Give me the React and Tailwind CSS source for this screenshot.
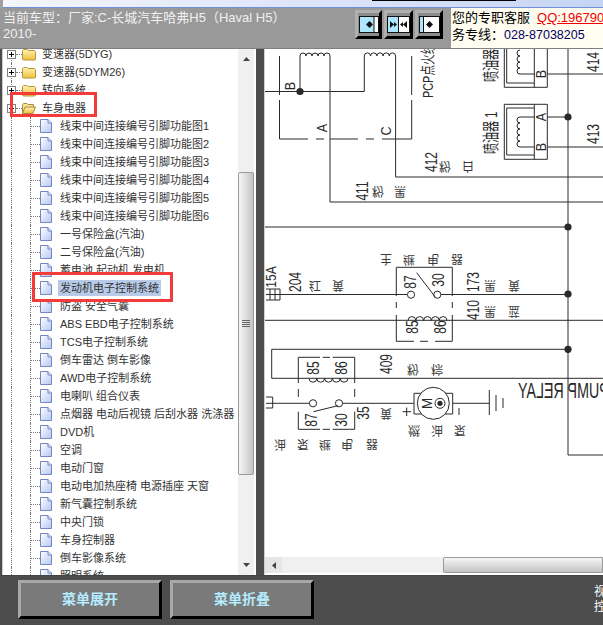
import React from "react";

const FONT = '"Liberation Sans","Noto Sans CJK SC",sans-serif';
const INK = "#2a2a2a";

const top = [
  ["变速器(5DYG)", false],
  ["变速器(5DYM26)", false],
  ["转向系统", false],
  ["车身电器", true],
];
const subs = [
  "线束中间连接编号引脚功能图1",
  "线束中间连接编号引脚功能图2",
  "线束中间连接编号引脚功能图3",
  "线束中间连接编号引脚功能图4",
  "线束中间连接编号引脚功能图5",
  "线束中间连接编号引脚功能图6",
  "一号保险盒(汽油)",
  "二号保险盒(汽油)",
  "蓄电池 起动机 发电机",
  "发动机电子控制系统",
  "防盗 安全气囊",
  "ABS EBD电子控制系统",
  "TCS电子控制系统",
  "倒车雷达 倒车影像",
  "AWD电子控制系统",
  "电喇叭 组合仪表",
  "点烟器 电动后视镜 后刮水器 洗涤器",
  "DVD机",
  "空调",
  "电动门窗",
  "电动电加热座椅 电源插座 天窗",
  "新气囊控制系统",
  "中央门锁",
  "车身控制器",
  "倒车影像系统",
  "照明系统",
];

function Folder({ open }) {
  return (
    <svg width="14" height="13" viewBox="0 0 14 13" className="shrink-0">
      <defs>
        <linearGradient id="fg" x1="0" y1="0" x2="0" y2="1">
          <stop offset="0" stopColor="#fff3b0" />
          <stop offset="1" stopColor="#f0c040" />
        </linearGradient>
      </defs>
      {open ? (
        <>
          <path d="M.5 11.5V2.5L1.5 1.5H5L6 2.5H11.5V5" fill="#f6e3a0" stroke="#a98a38" />
          <path d="M.5 11.5L3 5H13.5L11 11.5Z" fill="url(#fg)" stroke="#a98a38" />
        </>
      ) : (
        <path d="M.5 11.5V2.5L1.5 1.5H5L6 2.5H12.5L13.5 3.5V11.5L12.5 12H1.5Z" fill="url(#fg)" stroke="#b8953a" />
      )}
    </svg>
  );
}

function Doc() {
  return (
    <svg width="12" height="14" viewBox="0 0 12 14" className="shrink-0">
      <defs>
        <linearGradient id="dg" x1="0" y1="0" x2="1" y2="1">
          <stop offset="0" stopColor="#ffffff" />
          <stop offset="1" stopColor="#b4c8f0" />
        </linearGradient>
      </defs>
      <path d="M.5 .5H8L11.5 4V13.5H.5Z" fill="url(#dg)" stroke="#7484c4" />
      <path d="M8 .5V4H11.5" fill="#dfe8fa" stroke="#7484c4" />
    </svg>
  );
}

function Guide() {
  return <div className="absolute left-[8px] top-0 bottom-0 border-l border-dotted border-[#777]" />;
}

function TopRow({ label, open }) {
  return (
    <div className="relative h-[18px] flex items-center pl-[4px] whitespace-nowrap">
      <Guide />
      <div className="relative w-[9px] h-[9px] border border-[#808080] bg-white flex items-center justify-center shrink-0">
        <div className="absolute w-[5px] h-px bg-black" />
        {!open && <div className="absolute w-px h-[5px] bg-black" />}
      </div>
      <div className="w-[6px] border-t border-dotted border-[#777] shrink-0" />
      <Folder open={open} />
      <span className="ml-[6px] text-[11px] text-[#333]">{label}</span>
    </div>
  );
}

function SubRow({ label }) {
  const selected = label === "发动机电子控制系统";
  return (
    <div className="relative h-[18px] flex items-center pl-[27px] whitespace-nowrap">
      <Guide />
      <div className="w-[10px] h-full border-l border-dotted border-[#777] flex items-center shrink-0">
        <div className="w-full border-t border-dotted border-[#777]" />
      </div>
      <Doc />
      <span
        className={
          selected
            ? "ml-[6px] px-[2px] bg-[#b7cbe8] text-[11px] text-[#333] leading-[16px]"
            : "ml-[8px] text-[11px] text-[#333] leading-[16px]"
        }
      >
        {label}
      </span>
    </div>
  );
}

function VBar() {
  return (
    <div className="w-[16px] h-full bg-[#f0f0f0] flex flex-col items-center shrink-0">
      <div className="h-[20px] flex items-center justify-center shrink-0">
        <svg width="7" height="4"><path d="M3.5 0L7 4H0Z" fill="#444" /></svg>
      </div>
      <div className="h-[103px] shrink-0" />
      <div className="w-full h-[303px] shrink-0 rounded-[2px] border border-[#9a9a9a] bg-gradient-to-r from-[#f6f6f6] to-[#c4c4c4] flex flex-col items-center justify-center gap-px">
        <div className="w-[8px] h-px bg-[#666]" />
        <div className="w-[8px] h-px bg-[#666]" />
        <div className="w-[8px] h-px bg-[#666]" />
        <div className="w-[8px] h-px bg-[#666]" />
      </div>
      <div className="flex-1" />
      <div className="h-[20px] flex items-center justify-center shrink-0">
        <svg width="7" height="4"><path d="M0 0H7L3.5 4Z" fill="#444" /></svg>
      </div>
    </div>
  );
}

function ToolButton({ width, children }) {
  return (
    <div className={`${width} h-[29px] border-[3px] border-t-[#b0b0b0] border-l-[#b0b0b0] border-r-black border-b-black bg-[#8c8c8c] flex items-center justify-center`}>
      {children}
    </div>
  );
}

function L({ d, w = 1 }) {
  return <path d={d} fill="none" stroke={INK} strokeWidth={w} />;
}

function Dot({ x, y, r = 3.6 }) {
  return <circle cx={x} cy={y} r={r} fill={INK} />;
}

function bumps(x0, y, n, r, sweep) {
  let s = `M${x0} ${y}`;
  for (let i = 0; i < n; i++) s += `a${r} ${r} 0 0 ${sweep} ${2 * r} 0`;
  return s;
}

function vbumps(x, y0, n, r) {
  let s = `M${x} ${y0}`;
  for (let i = 0; i < n; i++) s += `a${r} ${r} 0 0 0 0 ${2 * r}`;
  return s;
}

/* rotated label reading bottom to top */
function V({ x, y, t, size = 16, sx = 0.75, anchor = "middle" }) {
  return (
    <text
      transform={`translate(${x},${y}) rotate(-90) scale(${sx},1)`}
      y={size * 0.36}
      textAnchor={anchor}
      fontSize={size}
      fill={INK}
      fontFamily={FONT}
    >
      {t}
    </text>
  );
}

/* vertically flipped cjk label */
function F({ x, y, t }) {
  return (
    <text
      transform={`translate(${x},${y}) scale(1,-1)`}
      y="4"
      textAnchor="middle"
      fontSize="12"
      fill="#3a3a3a"
      fontFamily={FONT}
    >
      {t}
    </text>
  );
}

function Diagram() {
  return (
    <svg viewBox="265 49 338 508" width="338" height="508" className="block shrink-0 bg-white">
      {/* upper coils */}
      <L d="M279.5 56V95M279.5 100V139H308M316 139H324M330 139H358M366 139H374M382 139H411.7V100M411.7 95V56" />
      <L d="M265 91.5H300V56M330 56V202H603" />
      <L d={bumps(300, 56, 5, 3, 1)} />
      <L d="M364.3 91.5V56M395.6 56V177H603M300 91.5H364.3" />
      <L d={bumps(364.3, 56, 5, 3.13, 1)} />
      <Dot x={300} y={91.5} />
      <V x={290} y={86} t="B" size={14} sx={0.9} />
      <V x={322} y={128} t="A" size={14} sx={0.9} />
      <V x={386} y={131} t="C" size={14} sx={0.9} />
      <V x={428} y={98} t="PCP点火线" size={15} sx={0.72} anchor="start" />
      <V x={431} y={162} t="412" />
      <F x={445} y={166} t="粉" />
      <F x={468} y={166} t="白" />
      <V x={362} y={191} t="411" />
      <F x={378} y={191} t="粉" />
      <F x={400} y={191} t="黑" />

      {/* injectors */}
      <L d="M504.3 49V87.3H547.3V49M534.3 49V87.3M506.7 49V83H534.3M547.3 74H603M519.7 74H534.3" />
      <L d={vbumps(520, 50, 4, 3)} />
      <L d="M504.3 104.3H547.3V159.3H504.3ZM534.3 104.3V159.3M506.7 108H534.3M506.7 155H534.3M506.7 108V155" />
      <L d="M520 117H534.3M520 147H534.3M547.3 117H568M547.3 147H603" />
      <L d={vbumps(520, 117, 5, 3)} />
      <V x={541} y={74} t="B" size={14} sx={0.9} />
      <V x={541} y={117} t="A" size={14} sx={0.9} />
      <V x={541} y={147} t="B" size={14} sx={0.9} />
      <V x={491} y={82} t="喷油器 2" size={17} sx={0.65} anchor="start" />
      <V x={491} y={154} t="喷油器 1" size={17} sx={0.65} anchor="start" />
      <V x={593} y={62} t="414" />
      <V x={593} y={134} t="413" />

      {/* main bus */}
      <L d="M568 49V455H603" />
      <Dot x={568} y={117} />
      <Dot x={568} y={227} />
      <Dot x={568} y={294} />
      <Dot x={568} y={349.3} />

      {/* main relay */}
      <L d="M265 227H568M265 320.3H603" />
      <L d="M266 289H280V300H266M270 289V300M275 289V300M266 294.5H407M441 294.5H568" />
      <circle cx="411" cy="294.7" r="3.6" fill="#fff" stroke={INK} />
      <circle cx="437.3" cy="294.7" r="3.6" fill="#fff" stroke={INK} />
      <L d="M416.7 272.7L435 296.7" />
      <L d="M396.3 302V308M396.3 315V341.3H414M420 341.3H428M435 341.3H452.3V315M452.3 308V302M396.3 296V267.3H452.3V296" />
      <L d={bumps(408, 320.5, 5, 3.9, 1)} />
      <V x={271} y={277} t="15A" size={15} sx={0.8} />
      <V x={295} y={282} t="204" />
      <V x={410} y={282} t="87" />
      <V x={438} y={280} t="30" />
      <V x={412} y={327} t="85" />
      <V x={440} y={327} t="86" />
      <V x={473} y={282} t="173" />
      <V x={473} y={310} t="410" />
      <F x={315} y={285} t="红" />
      <F x={338} y={285} t="黄" />
      <F x={490} y={285} t="黑" />
      <F x={514} y={285} t="黄" />
      <F x={490} y={311} t="黑" />
      <F x={514} y={311} t="蓝" />
      <F x={386} y={259} t="主" />
      <F x={409} y={259} t="继" />
      <F x={433} y={259} t="电" />
      <F x={457} y={259} t="器" />

      {/* fuel pump relay */}
      <L d="M271.7 378.3V349.3H568M271.7 378.3H603" />
      <L d="M298.3 383V357.3H320M322.7 357.3H330M332.7 357.3H354.7V383M298.3 389V397M354.7 389V397M298.3 411.7V429.3H320M322.7 429.3H330M332.7 429.3H354.7V411.7" />
      <L d={bumps(309, 378.3, 5, 3.9, 0)} />
      <L d="M266 397H272.7V408H266M266 403.3H309.5M342.7 403.3H414M452.7 403.3H489.3" />
      <circle cx="313" cy="403.3" r="3.6" fill="#fff" stroke={INK} />
      <circle cx="339" cy="403.3" r="3.6" fill="#fff" stroke={INK} />
      <L d="M313.3 411.7L338 405.7" />
      <V x={313} y={368} t="85" />
      <V x={341} y={368} t="86" />
      <V x={311} y={420} t="87" />
      <V x={341} y={420} t="30" />
      <V x={386} y={364} t="409" />
      <F x={413} y={369} t="粉" />
      <F x={437} y={369} t="棕" />
      <V x={363} y={413} t="35" />
      <F x={386} y={413} t="黄" />
      <F x={414} y={430} t="燃" />
      <F x={437} y={430} t="油" />
      <F x={460} y={430} t="泵" />
      <F x={280} y={444} t="油" />
      <F x={303} y={444} t="泵" />
      <F x={325} y={444} t="继" />
      <F x={347} y={444} t="电" />
      <F x={372} y={444} t="器" />

      {/* pump motor */}
      <L d="M414 393.3H452.7V414H414Z" />
      <circle cx="433.3" cy="403.3" r="16" fill="#fff" stroke={INK} />
      <V x={427} y={403.3} t="M" size={15} sx={0.9} />
      <circle cx="440" cy="403.3" r="5" fill="none" stroke={INK} />
      <Dot x={440} y={403.3} r={2.6} />
      <L d="M402.5 411.7H411M406.7 407.5V416M459 408V415M489.3 390V415M496 395V411M503 398V408" />

      <text
        transform="translate(518,398) scale(-0.65,1)"
        textAnchor="end"
        fontSize="22"
        fill={INK}
        fontFamily={FONT}
      >
        PUMP RELAY
      </text>
    </svg>
  );
}

export default function App() {
  return (
    <div className="w-[603px] h-[625px] overflow-hidden flex flex-col bg-[#4d4d4d]" style={{ fontFamily: FONT }}>
      {/* title strip */}
      <div className="h-[8px] flex shrink-0 bg-[#a0a0a0]">
        <div className="w-[3px]" />
        <div className="flex-1 border-b border-[#7090dc] bg-gradient-to-r from-[#f4f6fc] to-[#c6d4f4]">
          <div className="ml-[369px] w-[144px] h-px bg-black" />
        </div>
      </div>

      {/* header */}
      <div className="h-[41px] shrink-0 flex bg-[#999999] border-b border-[#808080]">
        <div className="w-[300px] pl-[3px] pt-[2px] text-[13px] leading-[16px] text-[#f0f0f0] shrink-0">
          当前车型：厂家:C-长城汽车哈弗H5（Haval H5）2010-
        </div>
        <div className="w-[55px] shrink-0" />
        <div className="flex gap-[2px] pt-[2px] w-[96px] shrink-0">
          <ToolButton width="w-[27px]">
            <svg width="20" height="17" viewBox="0 0 20 17">
              <rect x=".5" y=".5" width="19" height="16" fill="#aee6ff" stroke="#111" />
              <rect x="15" y="1" width="4" height="15" fill="#fff" />
              <path d="M15 1V16" stroke="#111" />
              <path d="M7 8.5L10.5 5L14 8.5L10.5 12Z" fill="#111" />
            </svg>
          </ToolButton>
          <ToolButton width="w-[29px]">
            <svg width="23" height="17" viewBox="0 0 23 17">
              <rect x=".5" y=".5" width="22" height="16" fill="#fff" stroke="#111" />
              <rect x="1" y="1" width="10" height="15" fill="#aee6ff" />
              <path d="M11.5 1V16" stroke="#111" />
              <path d="M3 5L7 8.5L3 12ZM7 6L10 8.5L7 11ZM20 5L16 8.5L20 12ZM16 6L13 8.5L16 11Z" fill="#111" />
            </svg>
          </ToolButton>
          <ToolButton width="w-[28px]">
            <svg width="21" height="17" viewBox="0 0 21 17">
              <rect x=".5" y=".5" width="20" height="16" fill="#fff" stroke="#111" />
              <rect x="1" y="1" width="3" height="15" fill="#aee6ff" />
              <path d="M4.5 1V16" stroke="#111" />
              <path d="M7 8.5L10.5 5L14 8.5L10.5 12Z" fill="#111" />
            </svg>
          </ToolButton>
        </div>
        <div className="flex-1 min-w-0 bg-[#fffdf0] overflow-hidden pl-px pt-px whitespace-nowrap text-[13px] leading-[17px] text-black">
          <div>
            您的专职客服
            <span className="ml-[7px] text-[#f00000] underline">QQ:1967907</span>
          </div>
          <div>
            务专线：<span className="text-[12.5px] text-[#000066]">028-87038205</span>
          </div>
        </div>
      </div>

      {/* main */}
      <div className="relative h-[526px] shrink-0 flex">
        <div className="w-[2px] bg-[#4d4d4d] shrink-0" />
        <div className="w-px bg-[#cccccc] shrink-0" />
        <div className="w-[235px] bg-white overflow-hidden shrink-0">
          <div className="-mt-[4px]">
            {top.map(([label, open]) => (
              <TopRow key={label} label={label} open={open} />
            ))}
            {subs.map((label) => (
              <SubRow key={label} label={label} />
            ))}
          </div>
        </div>
        <VBar />
        <div className="w-[2px] bg-white shrink-0" />
        <div className="w-[8px] bg-[#4d4d4d] shrink-0" />
        <div className="w-px bg-[#d0d0d0] shrink-0" />
        <div className="w-[338px] flex flex-col bg-white overflow-hidden shrink-0">
          <Diagram />
          <div className="h-[16px] bg-[#f0f0f0] flex shrink-0">
            <div className="w-[17px] flex items-center justify-center bg-[#e6e6e6] shrink-0">
              <svg width="4" height="7"><path d="M4 0V7L0 3.5Z" fill="#444" /></svg>
            </div>
            <div className="w-[161px] shrink-0" />
            <div className="flex-1 rounded-l-[2px] border border-[#9a9a9a] bg-gradient-to-b from-[#f6f6f6] to-[#c4c4c4]" />
          </div>
        </div>

        {/* red annotation frames */}
        <div className="absolute left-[10px] top-[43px] w-[87px] h-[25px] border-[3px] border-[#f53a3a]" />
        <div className="absolute left-[32px] top-[223px] w-[141px] h-[30px] border-[3px] border-[#f53a3a]" />
      </div>

      {/* bottom bar */}
      <div className="flex-1 flex items-start gap-[8px] pl-[18px] pt-[4px] bg-[#4d4d4d] border-t border-[#444444]">
        <button className="w-[144px] h-[39px] shrink-0 border-[3px] border-t-[#a8a8a8] border-l-[#a8a8a8] border-r-black border-b-black bg-[#7a7a7a] text-[14px] font-bold text-[#b5ecff]">
          菜单展开
        </button>
        <button className="w-[144px] h-[39px] shrink-0 border-[3px] border-t-[#a8a8a8] border-l-[#a8a8a8] border-r-black border-b-black bg-[#7a7a7a] text-[14px] font-bold text-[#b5ecff]">
          菜单折叠
        </button>
        <div className="ml-[272px] mt-[5px] text-[12px] leading-[15px] text-white shrink-0">
          <div>视</div>
          <div>控</div>
        </div>
      </div>
    </div>
  );
}
